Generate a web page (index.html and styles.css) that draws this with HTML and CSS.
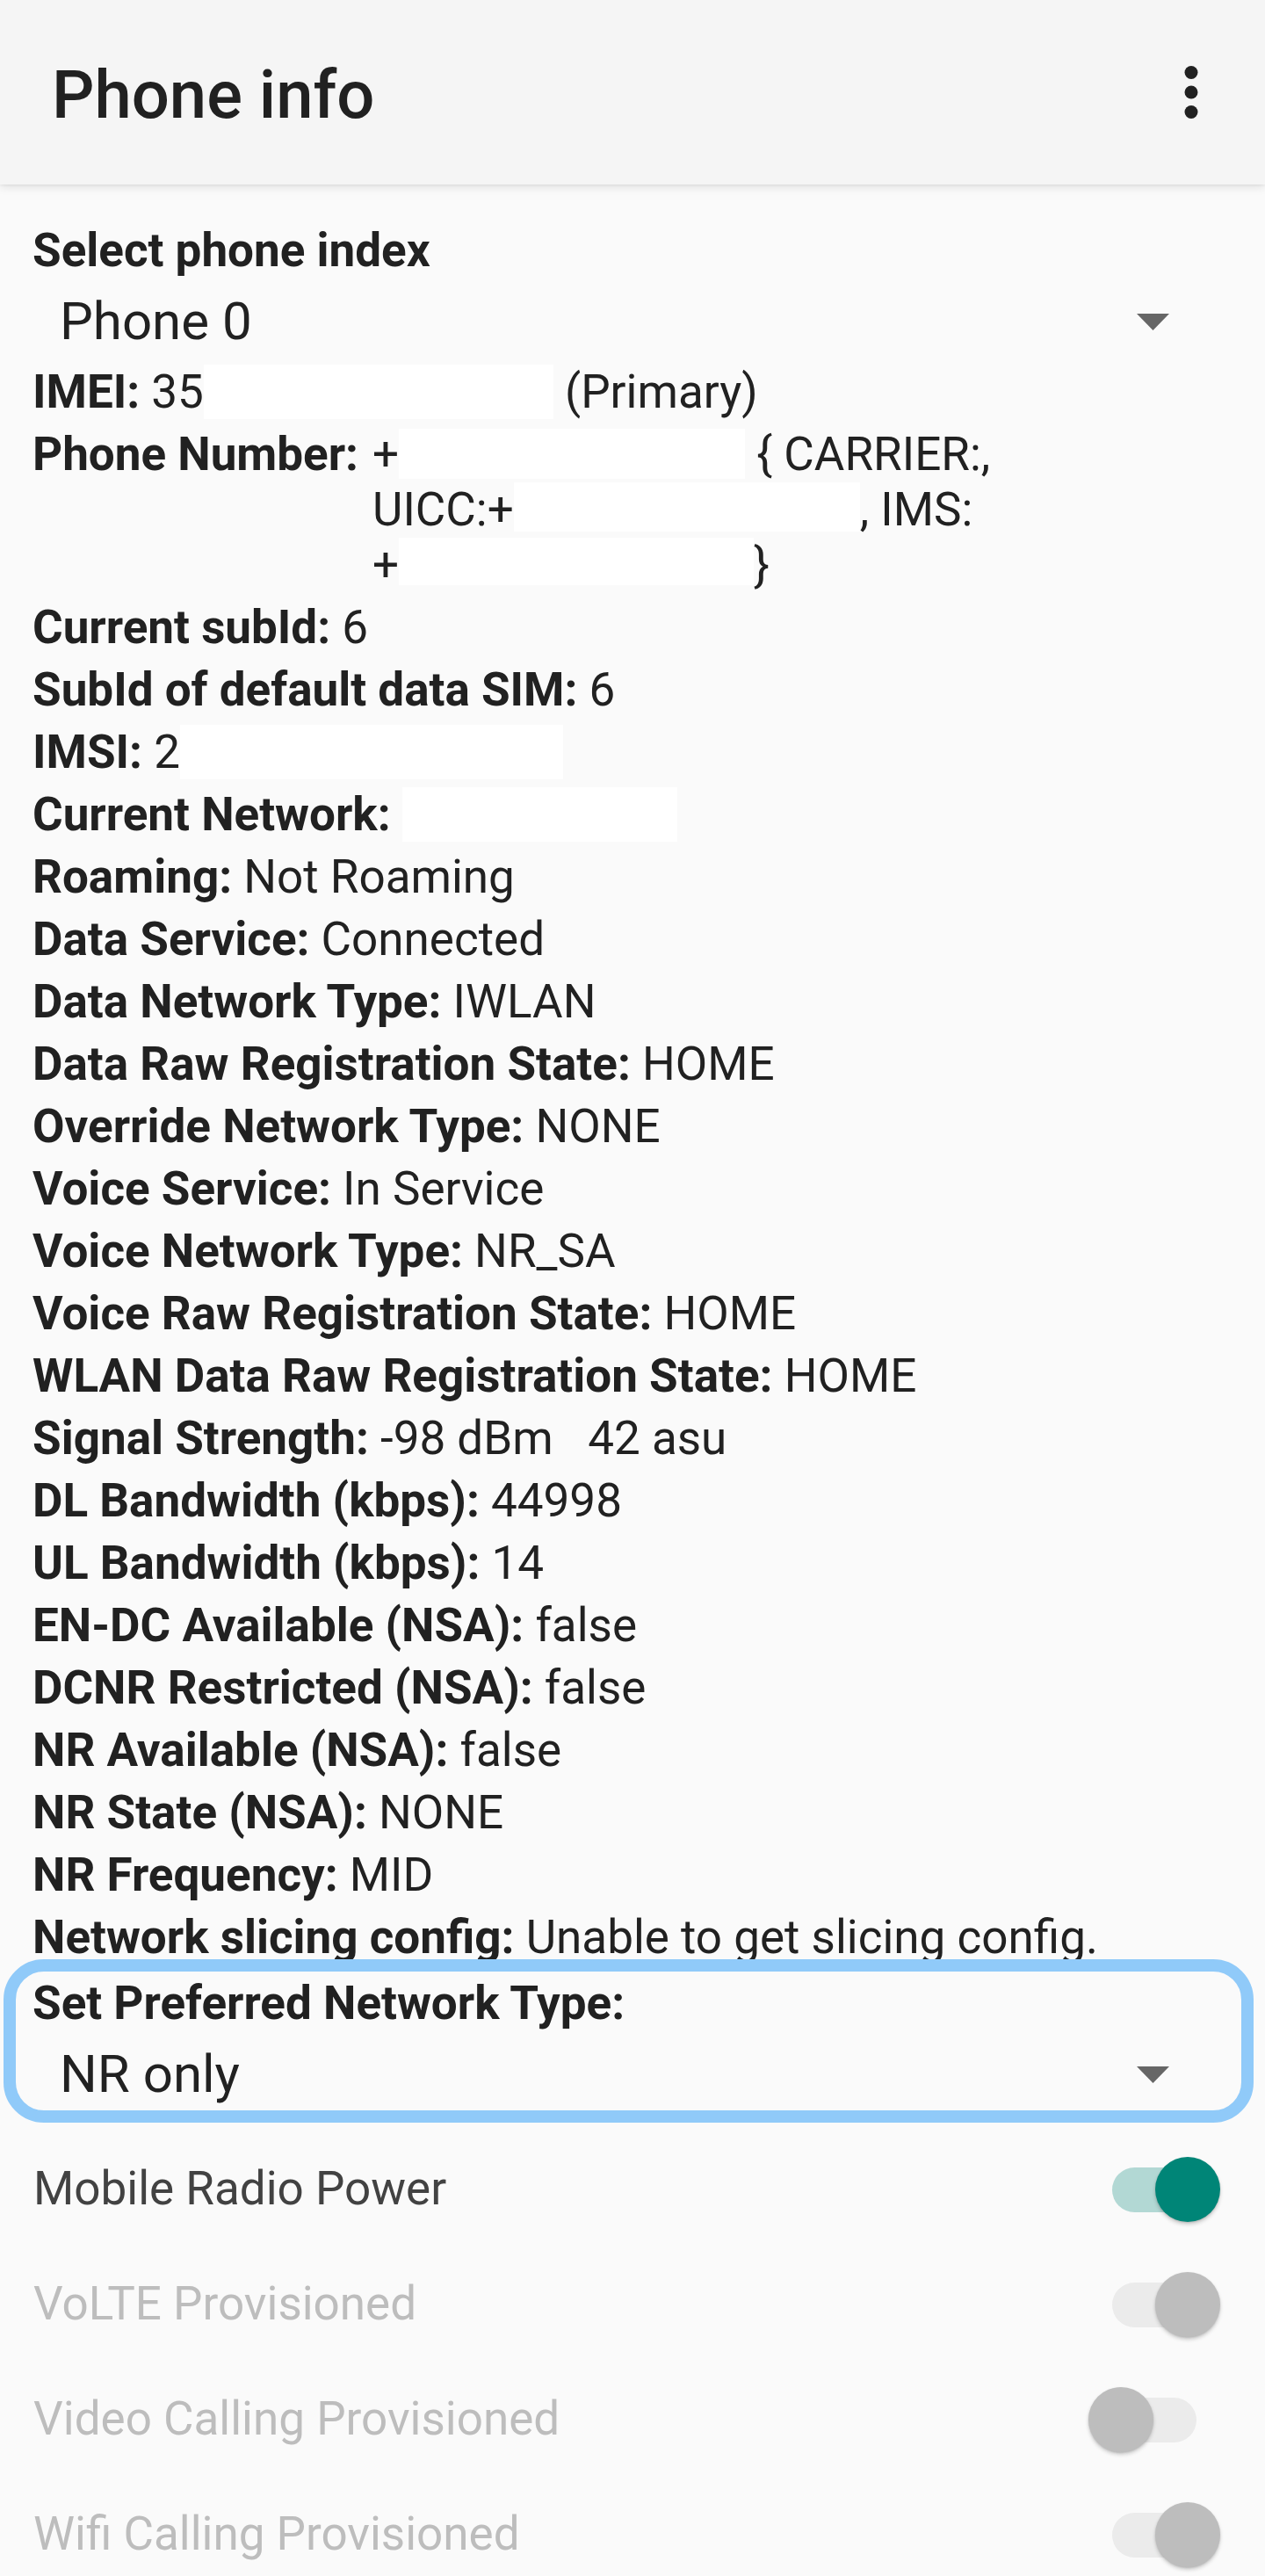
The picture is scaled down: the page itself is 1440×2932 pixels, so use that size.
FILE: index.html
```html
<!DOCTYPE html>
<html lang="en">
<head>
<meta charset="utf-8">
<title>Phone info</title>
<link rel="stylesheet" href="styles.css">
</head>
<body>
<header class="appbar">
  <h1 class="appbar-title">Phone info</h1>
  <button class="overflow" aria-label="More options">
    <svg viewBox="0 0 24 24" width="90" height="90"><circle cx="12" cy="6" r="2"/><circle cx="12" cy="12" r="2"/><circle cx="12" cy="18" r="2"/></svg>
  </button>
</header>
<main class="content">
  <div class="field-label">Select phone index</div>
  <div class="spinner">
    <span class="spinner-value">Phone 0</span>
    <svg class="spinner-arrow" viewBox="0 0 37 19" width="37" height="19"><polygon points="0,0 37,0 18.5,19"/></svg>
  </div>

  <div class="info-list">
    <p class="row"><b>IMEI:</b> 35<span class="redact redact-imei"></span> (Primary)</p>
    <div class="row row-split">
      <b>Phone Number:</b>
      <span class="value-block">+<span class="redact redact-num1"></span> { CARRIER:,<br>UICC:+<span class="redact redact-num2"></span>, IMS:<br>+<span class="redact redact-num3"></span>}</span>
    </div>
    <p class="row"><b>Current subId:</b> 6</p>
    <p class="row"><b>SubId of default data SIM:</b> 6</p>
    <p class="row"><b>IMSI:</b> 2<span class="redact redact-imsi"></span></p>
    <p class="row"><b>Current Network:</b> <span class="redact redact-net"></span></p>
    <p class="row"><b>Roaming:</b> Not Roaming</p>
    <p class="row"><b>Data Service:</b> Connected</p>
    <p class="row"><b>Data Network Type:</b> IWLAN</p>
    <p class="row"><b>Data Raw Registration State:</b> HOME</p>
    <p class="row"><b>Override Network Type:</b> NONE</p>
    <p class="row"><b>Voice Service:</b> In Service</p>
    <p class="row"><b>Voice Network Type:</b> NR_SA</p>
    <p class="row"><b>Voice Raw Registration State:</b> HOME</p>
    <p class="row"><b>WLAN Data Raw Registration State:</b> HOME</p>
    <p class="row"><b>Signal Strength:</b> -98 dBm&nbsp;&nbsp; 42 asu</p>
    <p class="row"><b>DL Bandwidth (kbps):</b> 44998</p>
    <p class="row"><b>UL Bandwidth (kbps):</b> 14</p>
    <p class="row"><b>EN-DC Available (NSA):</b> false</p>
    <p class="row"><b>DCNR Restricted (NSA):</b> false</p>
    <p class="row"><b>NR Available (NSA):</b> false</p>
    <p class="row"><b>NR State (NSA):</b> NONE</p>
    <p class="row"><b>NR Frequency:</b> MID</p>
    <p class="row"><b>Network slicing config:</b> Unable to get slicing config.</p>
  </div>

  <section class="pref focused">
    <div class="field-label">Set Preferred Network Type:</div>
    <div class="spinner">
      <span class="spinner-value">NR only</span>
      <svg class="spinner-arrow" viewBox="0 0 37 19" width="37" height="19"><polygon points="0,0 37,0 18.5,19"/></svg>
    </div>
  </section>

  <div class="toggles">
    <div class="toggle-row">
      <span class="toggle-label">Mobile Radio Power</span>
      <span class="switch on"><span class="track"></span><span class="thumb"></span></span>
    </div>
    <div class="toggle-row disabled">
      <span class="toggle-label">VoLTE Provisioned</span>
      <span class="switch on"><span class="track"></span><span class="thumb"></span></span>
    </div>
    <div class="toggle-row disabled">
      <span class="toggle-label">Video Calling Provisioned</span>
      <span class="switch"><span class="track"></span><span class="thumb"></span></span>
    </div>
    <div class="toggle-row disabled">
      <span class="toggle-label">Wifi Calling Provisioned</span>
      <span class="switch on"><span class="track"></span><span class="thumb"></span></span>
    </div>
  </div>
</main>
</body>
</html>
```

FILE: styles.css
```css
* { box-sizing: border-box; }

html, body {
  margin: 0;
  padding: 0;
  background: #fafafa;
}

body {
  font-family: Roboto, "Liberation Sans", Arial, sans-serif;
  color: #212121;
  overflow: hidden;
}

.appbar {
  height: 210px;
  background: #f5f5f5;
  display: flex;
  align-items: center;
  justify-content: space-between;
  padding: 6px 39px 0 59px;
  box-shadow: 0 3px 10px rgba(0, 0, 0, 0.10), 0 1px 3px rgba(0, 0, 0, 0.06);
  position: relative;
  z-index: 1;
}

.appbar-title {
  margin: 0;
  font-size: 76px;
  font-weight: 500;
  color: #212121;
  line-height: 1;
}

.overflow {
  border: 0;
  background: none;
  padding: 0;
  width: 90px;
  height: 90px;
  display: flex;
  margin-top: -6px;
}

.overflow svg { fill: #212121; }

.content {
  padding: 44px 40px 0 37px;
}

.field-label {
  font-size: 53px;
  font-weight: 700;
  line-height: 63px;
  height: 63px;
}

.spinner {
  height: 98px;
  display: flex;
  align-items: center;
  justify-content: space-between;
  padding: 0 69px 0 31px;
}

.spinner-value {
  font-size: 60px;
  font-weight: 400;
  color: #212121;
  line-height: 1;
}

.spinner-arrow {
  fill: #666666;
}

.info-list {
  display: flex;
  flex-direction: column;
  gap: 8px;
}

.row {
  margin: 0;
  font-size: 53px;
  line-height: 63px;
  white-space: nowrap;
}

.row b { font-weight: 700; }

.row-split {
  display: flex;
  align-items: flex-start;
}

.value-block {
  display: block;
  margin-left: 16px;
}

.redact {
  display: inline-block;
  vertical-align: top;
  height: 62px;
  background: #ffffff;
}

.redact-imei { width: 398px; }
.redact-num1 { width: 394px; height: 57px; margin-top: 2px; }
.redact-num2 { width: 394px; height: 56px; }
.redact-num3 { width: 404px; height: 54px; }
.redact-imsi { width: 436px; }
.redact-net { width: 313px; }

.pref {
  position: relative;
  margin-top: 8px;
  padding-top: 4px;
}

.pref.focused::before {
  content: "";
  position: absolute;
  top: -15px;
  bottom: -6px;
  left: -33px;
  right: -27px;
  border: 14px solid #90caf9;
  border-radius: 46px;
  pointer-events: none;
}

.toggles {
  margin-top: 16px;
}

.toggle-row {
  height: 131px;
  display: flex;
  align-items: center;
  justify-content: space-between;
  padding: 0 11px 0 1px;
}

.toggle-label {
  font-size: 53px;
  line-height: 1;
  color: #424242;
}

.toggle-row.disabled .toggle-label {
  color: #bdbdbd;
}

.switch {
  position: relative;
  width: 150px;
  height: 74px;
  flex: none;
}

.switch .track {
  position: absolute;
  left: 27px;
  top: 12px;
  width: 96px;
  height: 51px;
  border-radius: 26px;
  background: #ebebeb;
}

.switch .thumb {
  position: absolute;
  left: 0;
  top: 0;
  width: 74px;
  height: 74px;
  border-radius: 50%;
  background: #bdbdbd;
  box-shadow: 0 3px 4px rgba(0, 0, 0, 0.18), 0 1px 2px rgba(0, 0, 0, 0.12);
}

.switch.on .thumb { left: 76px; }

.toggle-row:not(.disabled) .switch.on .track { background: #b2d8d4; }
.toggle-row:not(.disabled) .switch.on .thumb { background: #008577; }
```
